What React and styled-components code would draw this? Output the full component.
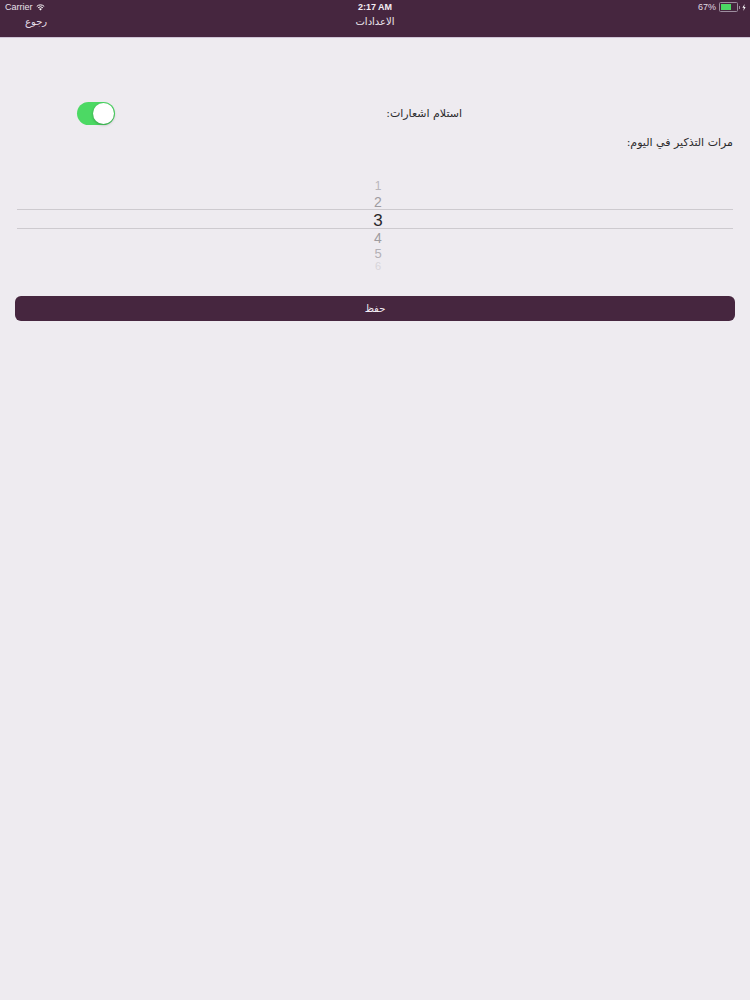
import React, { useState } from "react";
import styled, { createGlobalStyle } from "styled-components";

const GlobalStyle = createGlobalStyle`
  html, body {
    margin: 0;
    padding: 0;
    background: #eeebf0;
  }
  body {
    font-family: "Liberation Sans", "DejaVu Sans", sans-serif;
  }
`;

const pickerItems = [
  { n: 1, size: 12, color: "#b9b6bb", h: 16 },
  { n: 2, size: 14, color: "#9e9ba0", h: 17 },
  { n: 3, size: 17, color: "#2a282b", h: 19 },
  { n: 4, size: 14, color: "#9e9ba0", h: 17 },
  { n: 5, size: 13, color: "#b3b0b5", h: 14 },
  { n: 6, size: 11, color: "#d8d5da", h: 10 },
];

function App() {
  const [enabled, setEnabled] = useState(true);

  return (
    <>
      <GlobalStyle />
      <Page>
        <Header>
          <StatusBar>
            <Carrier>
              Carrier
              <svg width="9" height="7" viewBox="0 0 18 14">
                <path d="M9 13 L6.2 9.8 A4 4 0 0 1 11.8 9.8 Z" fill="#fff" />
                <path d="M4.2 7.6 A7 7 0 0 1 13.8 7.6" stroke="#fff" strokeWidth="2" fill="none" />
                <path d="M1.6 4.8 A10.5 10.5 0 0 1 16.4 4.8" stroke="#fff" strokeWidth="2" fill="none" />
              </svg>
            </Carrier>
            <Clock>2:17 AM</Clock>
            <Battery>
              67%
              <BatteryBody>
                <BatteryLevel style={{ width: "67%" }} />
              </BatteryBody>
              <BatteryTip />
              <svg width="4" height="7" viewBox="0 0 4 7">
                <path d="M2.6 0 L0.4 3.8 H1.9 L1.3 7 L3.6 3 H2.1 Z" fill="#fff" />
              </svg>
            </Battery>
          </StatusBar>
          <NavBar>
            <BackButton>رجوع</BackButton>
            <NavTitle>الاعدادات</NavTitle>
          </NavBar>
        </Header>

        <Content>
          <ToggleRow>
            <Label>استلام اشعارات:</Label>
            <Switch $on={enabled} onClick={() => setEnabled(!enabled)}>
              <Knob $on={enabled} />
            </Switch>
          </ToggleRow>

          <SectionLabel>مرات التذكير في اليوم:</SectionLabel>

          <Picker>
            <SelectionBand />
            {pickerItems.map((item) => (
              <PickerItem key={item.n} $size={item.size} $color={item.color} $h={item.h}>
                {item.n}
              </PickerItem>
            ))}
          </Picker>

          <SaveButton>حفظ</SaveButton>
        </Content>
      </Page>
    </>
  );
}

export default App;

const Page = styled.div`
  width: 750px;
  min-height: 1000px;
  background: #eeebf0;
`;

const Header = styled.div`
  background: #46263f;
  height: 37px;
  border-bottom: 1px solid #cfc4d6;
  color: #fff;
`;

const StatusBar = styled.div`
  height: 14px;
  display: flex;
  align-items: center;
  justify-content: space-between;
  padding: 0 4px 0 5px;
  font-size: 9px;
  position: relative;
`;

const Carrier = styled.div`
  display: flex;
  align-items: center;
  gap: 3px;
  color: #e8e2ea;
`;

const Clock = styled.div`
  position: absolute;
  left: 0;
  right: 0;
  text-align: center;
  font-weight: bold;
  font-size: 9px;
  color: #f4eef5;
  pointer-events: none;
`;

const Battery = styled.div`
  display: flex;
  align-items: center;
  gap: 1px;
  color: #e0d9e2;
`;

const BatteryBody = styled.div`
  width: 15px;
  height: 6px;
  border: 1px solid #9d8e9f;
  border-radius: 1.5px;
  padding: 1px;
  margin-left: 2px;
  display: flex;
`;

const BatteryLevel = styled.div`
  background: #4cd964;
  height: 100%;
`;

const BatteryTip = styled.div`
  width: 1px;
  height: 3px;
  background: #9d8e9f;
  margin-right: 1px;
`;

const NavBar = styled.div`
  height: 14px;
  display: flex;
  align-items: center;
  position: relative;
  font-family: "DejaVu Sans", sans-serif;
  font-size: 10px;
`;

const BackButton = styled.div`
  padding-left: 25px;
  color: #e6dfe8;
`;

const NavTitle = styled.div`
  position: absolute;
  left: 0;
  right: 0;
  text-align: center;
  color: #ece6ee;
  pointer-events: none;
`;

const Content = styled.div`
  padding: 63px 15px 0 15px;
  display: flex;
  flex-direction: column;
`;

const ToggleRow = styled.div`
  display: flex;
  direction: rtl;
  align-items: center;
  justify-content: space-between;
  padding: 0 273px 0 62px;
  height: 24px;
`;

const Label = styled.div`
  font-family: "DejaVu Sans", sans-serif;
  font-size: 11px;
  color: #2b2a2c;
`;

const Switch = styled.div`
  width: 38px;
  height: 23px;
  border-radius: 12px;
  background: ${(p) => (p.$on ? "#4cd964" : "#e4e1e6")};
  position: relative;
  cursor: pointer;
`;

const Knob = styled.div`
  position: absolute;
  top: 1px;
  left: ${(p) => (p.$on ? "16px" : "1px")};
  width: 21px;
  height: 21px;
  border-radius: 50%;
  background: #fff;
  box-shadow: 0 1px 3px rgba(0, 0, 0, 0.3);
`;

const SectionLabel = styled.div`
  direction: rtl;
  font-family: "DejaVu Sans", sans-serif;
  font-size: 11px;
  color: #2b2a2c;
  padding-right: 2px;
  margin-top: 11px;
`;

const Picker = styled.div`
  margin: 29px 2px 0 2px;
  display: flex;
  flex-direction: column;
  align-items: center;
  position: relative;
  padding-left: 6px;
`;

const SelectionBand = styled.div`
  position: absolute;
  left: 0;
  right: 0;
  top: 31px;
  height: 18px;
  border-top: 1px solid #cdcacf;
  border-bottom: 1px solid #cdcacf;
`;

const PickerItem = styled.div`
  height: ${(p) => p.$h}px;
  line-height: ${(p) => p.$h}px;
  font-size: ${(p) => p.$size}px;
  color: ${(p) => p.$color};
  font-family: "Liberation Sans", sans-serif;
`;

const SaveButton = styled.button`
  margin-top: 25px;
  height: 25px;
  border: none;
  border-radius: 6px;
  background: #46263f;
  color: #f2ecf4;
  font-family: "DejaVu Sans", sans-serif;
  font-size: 10px;
  cursor: pointer;
`;
